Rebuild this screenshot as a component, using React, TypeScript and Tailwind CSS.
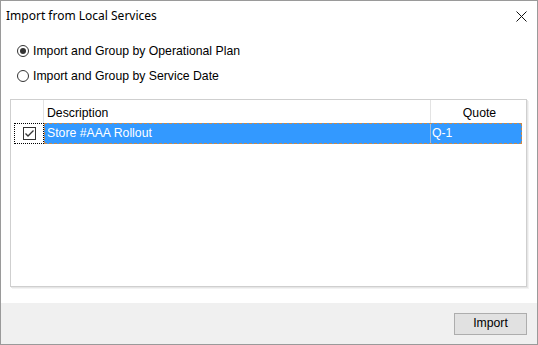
import { useState } from "react";

const body = { fontFamily: '"Liberation Sans", Arial, sans-serif' };
const title = { fontFamily: '"Noto Sans", "Open Sans", sans-serif' };

function Radio({ checked, label, onClick }: { checked: boolean; label: string; onClick: () => void }) {
  return (
    <div className="flex h-[20px] items-center pl-[16px] cursor-default" onClick={onClick}>
      <span className="flex h-[12px] w-[12px] items-center justify-center rounded-full border border-[#333333] bg-white">
        {checked && <span className="h-[6px] w-[6px] rounded-full bg-[#333333]" />}
      </span>
      <span className="ml-[4px] text-[12.25px] text-black">{label}</span>
    </div>
  );
}

export default function App() {
  const [mode, setMode] = useState("plan");
  const [checked, setChecked] = useState(true);

  return (
    <div className="flex h-[345px] w-[538px] flex-col border border-[#9a9a9a] bg-white" style={body}>
      {/* Title bar */}
      <div className="flex h-[30px] items-center justify-between pl-[5px] pr-[10px]">
        <span className="text-[12px] text-black" style={title}>Import from Local Services</span>
        <svg width="11" height="11" viewBox="0 0 11 11">
          <path d="M0.5 0.5 L10.5 10.5 M10.5 0.5 L0.5 10.5" stroke="#111" strokeWidth="1" />
        </svg>
      </div>

      {/* Content */}
      <div className="flex flex-1 flex-col">
        <div className="mt-[10px] flex flex-col gap-[5px]">
          <Radio checked={mode === "plan"} label="Import and Group by Operational Plan" onClick={() => setMode("plan")} />
          <Radio checked={mode === "date"} label="Import and Group by Service Date" onClick={() => setMode("date")} />
        </div>

        <div className="ml-[9px] mt-[13px] h-[188px] w-[517px] border border-[#cfcfcf] bg-white shadow-[1px_1px_0_#e6e6e6,2px_2px_0_#f3f3f3]">
          {/* Header */}
          <div className="flex h-[23px] text-[12.25px] text-black">
            <div className="w-[33px] border-r border-[#e3e3e3]" />
            <div className="flex w-[387px] items-center border-r border-[#e3e3e3] pl-[3px] pt-[3px]">Description</div>
            <div className="flex flex-1 items-center justify-center pt-[3px] pl-[2px]">Quote</div>
          </div>
          {/* Row */}
          <div className="flex h-[21px] text-[12.25px]">
            <div className="ml-[3px] flex w-[30px] items-center justify-center border border-dotted border-black" onClick={() => setChecked(!checked)}>
              <span className="flex h-[13px] w-[13px] items-center justify-center border border-[#333333] bg-white">
                {checked && (
                  <svg width="11" height="11" viewBox="0 0 11 11">
                    <path d="M1.5 5.5 L4 8 L9.5 2.5" stroke="#333" strokeWidth="1.3" fill="none" />
                  </svg>
                )}
              </span>
            </div>
            <div className="flex w-[478px] border border-dashed border-[#c8884a] bg-[#3399ff] text-white">
              <div className="flex w-[386px] items-center border-r border-[#9fb9d6] pl-[2px]">Store #AAA Rollout</div>
              <div className="flex flex-1 items-center pl-[1px]">Q-1</div>
            </div>
          </div>
        </div>
      </div>

      {/* Footer */}
      <div className="flex h-[41px] items-center justify-end bg-[#f0f0f0] pr-[10px]">
        <button className="h-[22px] w-[73px] border border-[#adadad] bg-[#e1e1e1] text-[12.25px] text-black">Import</button>
      </div>
    </div>
  );
}
